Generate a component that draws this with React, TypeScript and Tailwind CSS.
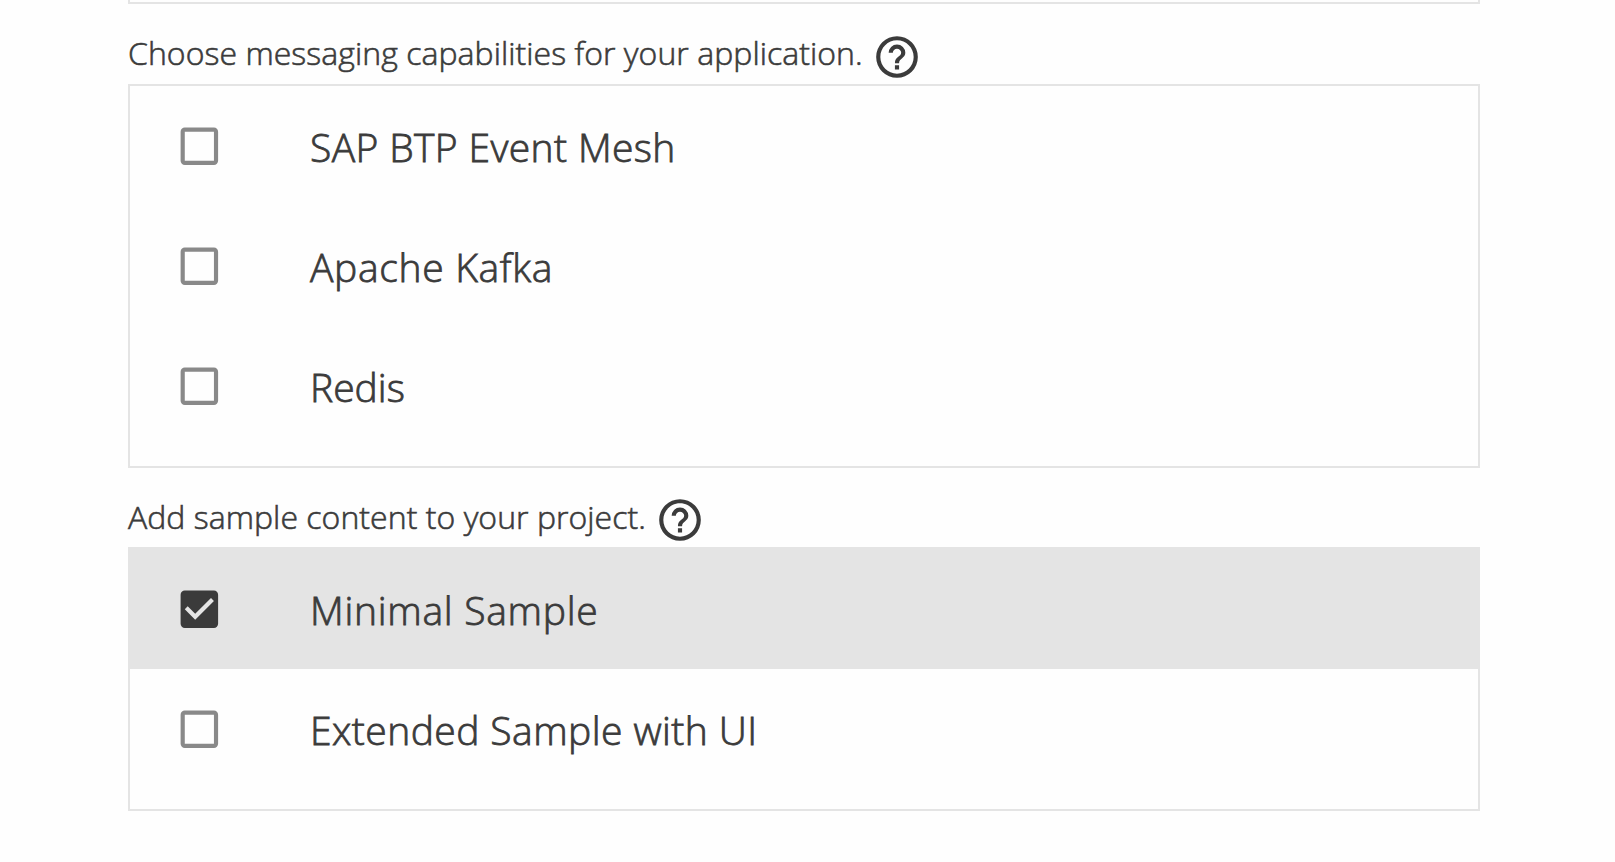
import { useState } from 'react';

type Option = { label: string; tracking: string; checked?: boolean };

const MESSAGING: Option[] = [
  { label: 'SAP BTP Event Mesh', tracking: 'tracking-[0.38px]' },
  { label: 'Apache Kafka', tracking: 'tracking-[0.68px]' },
  { label: 'Redis', tracking: 'tracking-[0px]' },
];

const SAMPLES: Option[] = [
  { label: 'Minimal Sample', tracking: 'tracking-[0.73px]', checked: true },
  { label: 'Extended Sample with UI', tracking: 'tracking-[0.44px]' },
];

function HelpIcon() {
  return (
    <svg viewBox="0 0 24 24" className="size-[50px] shrink-0 fill-[#3b3b3b]" aria-hidden="true">
      <path d="M11,18H13V16H11V18M12,2A10,10 0 0,0 2,12A10,10 0 0,0 12,22A10,10 0 0,0 22,12A10,10 0 0,0 12,2M12,20C7.59,20 4,16.41 4,12C4,7.59 7.59,4 12,4C16.41,4 20,7.59 20,12C20,16.41 16.41,20 12,20M12,6A4,4 0 0,0 8,10H10A2,2 0 0,1 12,8A2,2 0 0,1 14,10C14,12 11,11.75 11,15H13C13,12.75 16,12.5 16,10A4,4 0 0,0 12,6Z" />
    </svg>
  );
}

function Checkbox({ checked }: { checked: boolean }) {
  return checked ? (
    <svg viewBox="-0.17 -0.12 24 24" className="size-[50px] shrink-0 fill-[#3b3b3b]" aria-hidden="true">
      <path d="M10,17L5,12L6.41,10.58L10,14.17L17.59,6.58L19,8M19,3H5C3.89,3 3,3.89 3,5V19A2,2 0 0,0 5,21H19A2,2 0 0,0 21,19V5C21,3.89 20.1,3 19,3Z" />
    </svg>
  ) : (
    <svg viewBox="-0.17 -0.12 24 24" className="size-[50px] shrink-0 fill-[#898989]" aria-hidden="true">
      <path d="M19,3H5C3.89,3 3,3.89 3,5V19A2,2 0 0,0 5,21H19A2,2 0 0,0 21,19V5C21,3.89 20.1,3 19,3M19,5V19H5V5H19Z" />
    </svg>
  );
}

function OptionList({ options }: { options: Option[] }) {
  const [checked, setChecked] = useState(options.map((o) => !!o.checked));
  return (
    <ul className="border-2 border-[#e4e4e4] pb-5">
      {options.map((option, i) => (
        <li
          key={option.label}
          role="checkbox"
          aria-checked={checked[i]}
          onClick={() => setChecked(checked.map((c, j) => (j === i ? !c : c)))}
          className={`flex h-[120px] cursor-pointer items-center pl-11 ${checked[i] ? 'bg-[#e4e4e4]' : ''}`}
        >
          <Checkbox checked={checked[i]} />
          <span
            className={`pl-[86px] text-[39px] leading-none whitespace-nowrap [-webkit-text-stroke:0.8px_#3b3b3b] ${option.tracking}`}
          >
            {option.label}
          </span>
        </li>
      ))}
    </ul>
  );
}

export default function App() {
  return (
    <main className="h-[862px] overflow-hidden bg-[#fefefe] pr-[135px] pl-32 font-['Open_Sans',sans-serif] font-light text-[#3b3b3b]">
      <div className="h-1 border-2 border-t-0 border-[#e4e4e4]" />
      <section>
        <h2 className="flex h-20 items-start pt-7 text-[32px] leading-[50px]">
          <span className="-mt-1 w-[744px] shrink-0 tracking-[0.05px] whitespace-nowrap [-webkit-text-stroke:0.6px_#3b3b3b]">
            Choose messaging capabilities for your application.
          </span>
          <HelpIcon />
        </h2>
        <OptionList options={MESSAGING} />
      </section>
      <section>
        <h2 className="flex h-[79px] items-start pt-[27px] text-[32px] leading-[50px]">
          <span className="-mt-[3px] w-[527px] shrink-0 tracking-[0.04px] whitespace-nowrap [-webkit-text-stroke:0.6px_#3b3b3b]">
            Add sample content to your project.
          </span>
          <HelpIcon />
        </h2>
        <OptionList options={SAMPLES} />
      </section>
    </main>
  );
}
